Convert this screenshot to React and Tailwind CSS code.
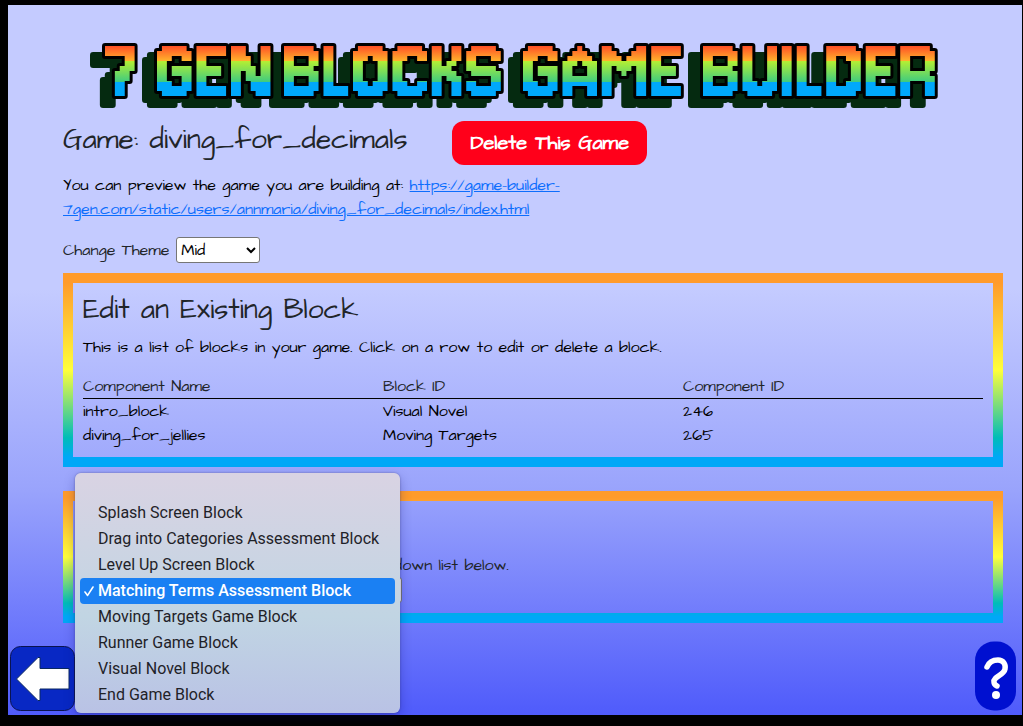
// src/App.jsx
import React, { useState } from "react";

/* ---------- Data ---------- */
const THEMES = ["Elementary", "Mid", "High"];

const BLOCKS = [
  { name: "intro_block", type: "Visual Novel", id: 246 },
  { name: "diving_for_jellies", type: "Moving Targets", id: 265 },
];

const BLOCK_TYPES = [
  "",
  "Splash Screen Block",
  "Drag into Categories Assessment Block",
  "Level Up Screen Block",
  "Matching Terms Assessment Block",
  "Moving Targets Game Block",
  "Runner Game Block",
  "Visual Novel Block",
  "End Game Block",
];

const PREVIEW_URL =
  "https://game-builder-7gen.com/static/users/annmaria/diving_for_decimals/index.html";

/* ---------- Logo ---------- */
const Logo = () => (
  <svg
    viewBox="0 0 860 72"
    className="ml-6 block w-[860px] max-w-full overflow-visible font-['Jersey_10','DejaVu_Sans_Mono',monospace] text-[92px] font-normal"
  >
    <defs>
      <linearGradient id="rainbow" gradientUnits="userSpaceOnUse" x1="0" y1="6" x2="0" y2="56">
        <stop offset="0" stopColor="#ff4f26" />
        <stop offset="0.29" stopColor="#ffb02c" />
        <stop offset="0.29" stopColor="#b8f030" />
        <stop offset="0.72" stopColor="#3ecb80" />
        <stop offset="0.72" stopColor="#00a8fb" />
        <stop offset="1" stopColor="#00a8fb" />
      </linearGradient>
    </defs>
    <g
      fill="url(#rainbow)"
      stroke="#000"
      strokeWidth="6"
      strokeLinejoin="round"
      paintOrder="stroke"
      className="drop-shadow-[-12px_9px_0_#052a10]"
    >
      <text x="18" y="56">7</text>
      <text x="70" y="56">GEN</text>
      <text x="197" y="56">BLOCKS</text>
      <text x="436" y="56">GAME</text>
      <text x="616" y="56">BUILDER</text>
    </g>
  </svg>
);

/* ---------- Rainbow bordered panel ---------- */
const Panel = ({ children }) => (
  <section className="border-10 p-[10px] [border-image:linear-gradient(#ff9b2b_5%,#ffff3b_50%,#00bcb8_85%,#00a8f7_95%)_10]">
    {children}
  </section>
);

/* ---------- Open block type menu ---------- */
const BlockTypeMenu = ({ selected, onSelect }) => (
  <ul
    role="listbox"
    aria-label="Block types"
    className="absolute -top-[104px] -left-2 z-10 w-[325px] rounded-md bg-linear-to-b from-[#d9d3e3] via-[#c1d5e3] via-60% to-[#b9c2e5] px-[5px] pt-px pb-[5px] font-[Roboto,sans-serif] text-base text-[#1f2228] shadow-[0_0_2px_#33336688,0_4px_12px_#00006644]"
  >
    {BLOCK_TYPES.map((type) => (
      <li
        key={type}
        role="option"
        aria-selected={type === selected}
        onClick={() => onSelect(type)}
        className={`flex h-[26px] items-center rounded whitespace-nowrap ${
          type === selected ? "bg-[#1a80f3] font-medium text-white" : ""
        }`}
      >
        <span className="flex w-[18px] shrink-0 justify-center">
          {type === selected && (
            <svg viewBox="0 0 10 12" className="h-3 w-[10px]" fill="none" stroke="currentColor" strokeWidth="1.6">
              <path d="M1 7l2.6 3.4L9 2" strokeLinecap="round" strokeLinejoin="round" />
            </svg>
          )}
        </span>
        {type}
      </li>
    ))}
  </ul>
);

/* ---------- Main App component ---------- */
export default function App() {
  const [theme, setTheme] = useState("Mid");
  const [blockType, setBlockType] = useState("Matching Terms Assessment Block");

  return (
    <div className="flex min-h-screen flex-col bg-black pt-[5px] pr-px pb-[11px] pl-2">
      <main className="relative grow bg-linear-to-b/srgb from-[#c4cbff] from-40% via-[#9aa4fc] via-68% to-[#4f5bfb] pt-[35px] pr-[19px] pb-6 pl-[55px] font-['Architects_Daughter','Open_Sans',sans-serif] text-base leading-6 text-[#212529]">
        <h1 aria-label="7 Gen Blocks Game Builder">
          <Logo />
        </h1>

        {/* Game title */}
        <div className="mt-[9px] flex items-start gap-[45px]">
          <h2 className="pt-[2px] text-[28px] leading-[34px] font-medium">Game: diving_for_decimals</h2>
          <button className="h-11 rounded-xl bg-[#ff001a] px-[18px] text-xl font-bold text-white">
            Delete This Game
          </button>
        </div>

        <p className="mt-2 max-w-[520px] text-black">
          You can preview the game you are building at:{" "}
          <a href={PREVIEW_URL} className="text-[#0d6efd] underline">
            {PREVIEW_URL}
          </a>
        </p>

        {/* Theme */}
        <div className="mt-4 mb-[10px] flex items-center gap-[7px]">
          <label htmlFor="theme">Change Theme</label>
          <select
            id="theme"
            value={theme}
            onChange={(e) => setTheme(e.target.value)}
            className="h-[26px] w-[84px] rounded-[3px] border border-[#767676] bg-white text-black"
          >
            {THEMES.map((t) => (
              <option key={t}>{t}</option>
            ))}
          </select>
        </div>

        {/* Existing blocks */}
        <Panel>
          <h2 className="mb-2 text-[28px] leading-[34px] font-medium">Edit an Existing Block</h2>
          <p className="mb-4 text-black">
            This is a list of blocks in your game. Click on a row to edit or delete a block.
          </p>
          <table className="w-full table-fixed text-left">
            <thead className="leading-[23px]">
              <tr className="border-b border-black">
                <th className="font-normal">Component Name</th>
                <th className="font-normal">Block ID</th>
                <th className="font-normal">Component ID</th>
              </tr>
            </thead>
            <tbody className="text-black">
              {BLOCKS.map((block) => (
                <tr key={block.id}>
                  <td>{block.name}</td>
                  <td>{block.type}</td>
                  <td>{block.id}</td>
                </tr>
              ))}
            </tbody>
          </table>
        </Panel>

        {/* New block */}
        <div className="mt-6">
          <Panel>
            <p className="pt-[42px] pl-[311px]">down list below.</p>
            <div className="relative w-[319px]">
              <select
                aria-label="Block type"
                value={blockType}
                onChange={(e) => setBlockType(e.target.value)}
                className="block h-[26px] w-full rounded-[3px] border border-[#767676] bg-white text-black"
              >
                {BLOCK_TYPES.map((type) => (
                  <option key={type}>{type}</option>
                ))}
              </select>
              <BlockTypeMenu selected={blockType} onSelect={setBlockType} />
            </div>
          </Panel>
        </div>

        {/* Back and help */}
        <button aria-label="Back" className="absolute bottom-1 left-[2px]">
          <svg viewBox="0 0 65 65" className="size-[65px]">
            <rect x="0.5" y="0.5" width="64" height="64" rx="10" fill="#0828c4" stroke="#0a1450" />
            <path d="M6.500 33L28 11.500H30V22.500H59V43H30V54.500H28Z" fill="#fff" stroke="#0a2860" strokeLinejoin="round" />
          </svg>
        </button>
        <button aria-label="Help" className="absolute right-[5px] bottom-[3px]">
          <svg viewBox="0 0 42 71" className="h-[71px] w-[42px]" fill="none">
            <rect y="0.5" width="41" height="69" rx="19" fill="#0010d0" />
            <path
              d="M12 26C14 21 18 19 23 19C28 19 31 23 30 28C29 34 18 36 19 41C19 43 20 44 22 45"
              stroke="#fff"
              strokeWidth="5.500"
              strokeLinecap="round"
              strokeLinejoin="round"
            />
            <circle cx="21" cy="54" r="4" fill="#fff" />
          </svg>
        </button>
      </main>
    </div>
  );
}
